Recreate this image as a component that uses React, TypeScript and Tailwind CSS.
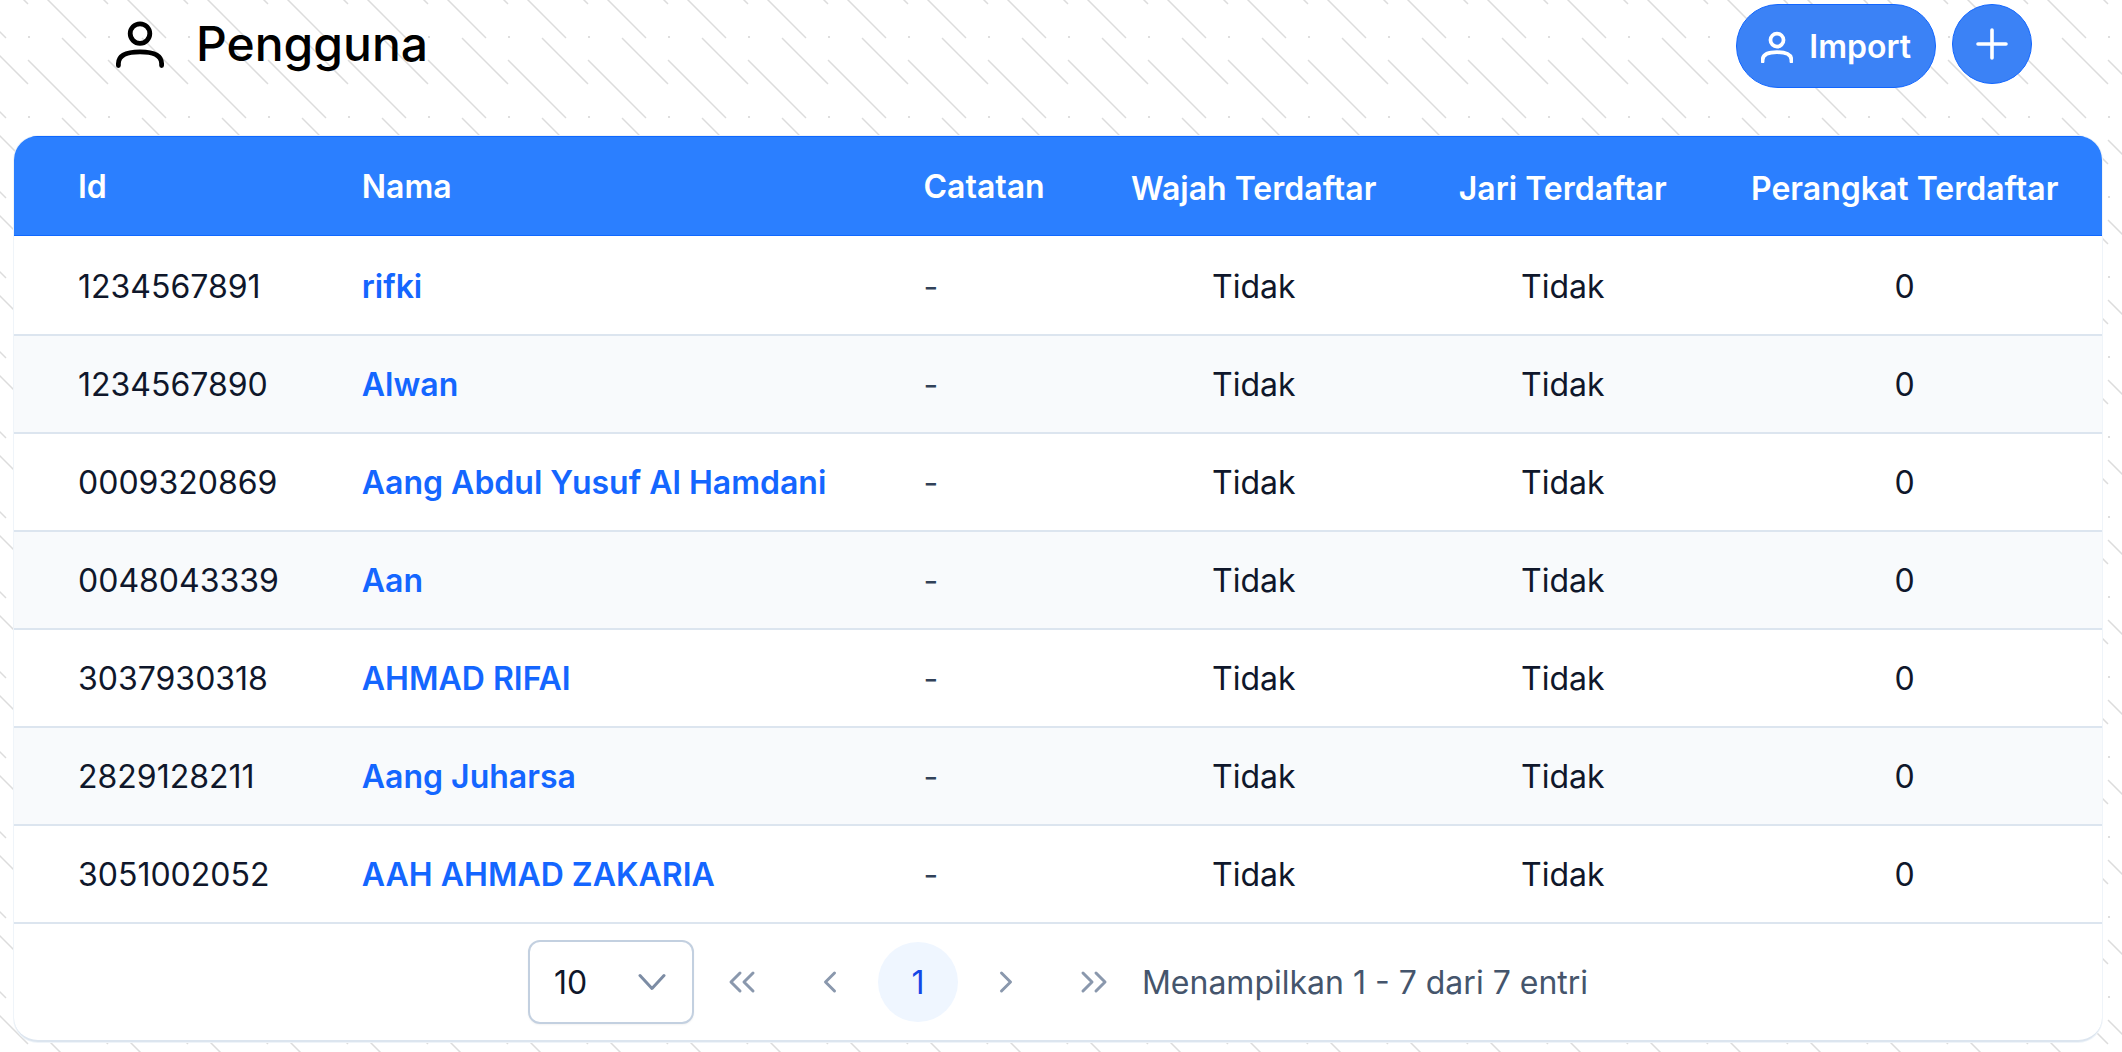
import React from "react";

type User = { id: string; name: string };

const users: User[] = [
  { id: "1234567891", name: "rifki" },
  { id: "1234567890", name: "Alwan" },
  { id: "0009320869", name: "Aang Abdul Yusuf Al Hamdani" },
  { id: "0048043339", name: "Aan" },
  { id: "3037930318", name: "AHMAD RIFAI" },
  { id: "2829128211", name: "Aang Juharsa" },
  { id: "3051002052", name: "AAH AHMAD ZAKARIA" },
];

function Backdrop() {
  return (
    <svg aria-hidden="true" className="absolute inset-0 -z-10 h-full w-full">
      <defs>
        <pattern id="hatch" width="80" height="80" patternUnits="userSpaceOnUse">
          <g stroke="#dcdcdc" strokeWidth="1.5">
            <path d="M28 -20L86 38M28 60L86 118M-52 60L6 118M-52 -20L6 38" />
            <path d="M62 38L108 84M-18 38L28 84M62 -42L108 4M-18 -42L28 4" />
          </g>
          <rect x="28" y="36" width="2" height="2" fill="#dedede" />
        </pattern>
      </defs>
      <rect width="100%" height="100%" fill="url(#hatch)" />
    </svg>
  );
}

function UserIcon({ className, weight }: { className: string; weight: number }) {
  return (
    <svg aria-hidden="true" viewBox="0 0 48 48" fill="none" stroke="currentColor" strokeWidth={weight} strokeLinecap="round" className={className}>
      <circle cx="24" cy="13.6" r="9.8" />
      <path d="M2.400 45.600v-2C2.400 35 10 31.800 24 31.800S45.600 35 45.600 43.600v2" />
    </svg>
  );
}

function Chevrons({ d }: { d: string }) {
  return (
    <svg aria-hidden="true" viewBox="0 0 28 28" fill="none" stroke="currentColor" strokeWidth="3" strokeLinecap="round" strokeLinejoin="round" className="size-7">
      <path d={d} />
    </svg>
  );
}

function PageButton({ label, d }: { label: string; d: string }) {
  return (
    <button type="button" disabled aria-label={label} className="flex size-20 items-center justify-center rounded-full text-[#8a98ad]">
      <Chevrons d={d} />
    </button>
  );
}

const headCell =
  "border-b-2 border-white bg-[#2b7fff] font-semibold whitespace-nowrap shadow-[inset_0_1px_#0f68ff,inset_0_-1px_#0f68ff]";
const bodyCell = "border-b-2 border-[#dce5ef] pt-0.5";

export default function App() {
  return (
    <div className="relative isolate min-h-screen bg-white pt-1 pr-5 pl-3.5 font-['Inter',sans-serif] text-[32px] leading-10 text-slate-900">
      <Backdrop />
      <header className="flex h-[132px] items-start justify-between pr-[70px] pl-[102px]">
        <h1 className="flex h-20 items-center gap-8 text-[48px] leading-none font-medium text-black">
          <UserIcon weight={4.8} className="size-12" />
          Pengguna
        </h1>
        <div className="flex items-start gap-4">
          <button type="button" className="flex h-21 items-center gap-4 rounded-full border border-[#1266ff] bg-[#3b82f6] px-6 pt-0.5 font-semibold text-white">
            <UserIcon weight={5.6} className="size-8" />
            Import
          </button>
          <button type="button" aria-label="Tambah" className="flex size-20 items-center justify-center rounded-full border border-[#1266ff] bg-[#3b82f6] text-white">
            <svg aria-hidden="true" viewBox="0 0 32 32" fill="none" stroke="currentColor" strokeWidth="3.6" strokeLinecap="round" className="size-8">
              <path d="M16 2v28M2 16h28" />
            </svg>
          </button>
        </div>
      </header>

      <main className="overflow-hidden rounded-[24px] border-b-2 border-[#dce5ef] bg-white shadow-[0_0_0_1px_#eff4f9]">
        <table className="w-full table-fixed border-separate border-spacing-0">
          <colgroup>
            <col className="w-[14.550%]" />
            <col className="w-[26.900%]" />
            <col className="w-[10.050%]" />
            <col className="w-[15.750%]" />
            <col className="w-[13.850%]" />
            <col />
          </colgroup>
          <thead>
            <tr className="h-[102px] text-white">
              <th scope="col" className={`${headCell} pt-0.5 pl-16 text-left`}>Id</th>
              <th scope="col" className={`${headCell} pt-0.5 pl-11 text-left`}>Nama</th>
              <th scope="col" className={`${headCell} pt-0.5 pl-11 text-left`}>Catatan</th>
              <th scope="col" className={`${headCell} pt-1.5`}>Wajah Terdaftar</th>
              <th scope="col" className={`${headCell} pt-1.5`}>Jari Terdaftar</th>
              <th scope="col" className={`${headCell} pt-1.5`}>Perangkat Terdaftar</th>
            </tr>
          </thead>
          <tbody>
            {users.map((u) => (
              <tr key={u.id} className="h-[98px] even:bg-slate-50">
                <td className={`${bodyCell} pl-16`}>{u.id}</td>
                <td className={`${bodyCell} pl-11 font-semibold whitespace-nowrap text-[#1466ff]`}>
                  <a href="#">{u.name}</a>
                </td>
                <td className={`${bodyCell} pl-11 text-slate-700`}>-</td>
                <td className={`${bodyCell} text-center`}>Tidak</td>
                <td className={`${bodyCell} text-center`}>Tidak</td>
                <td className={`${bodyCell} text-center`}>0</td>
              </tr>
            ))}
          </tbody>
        </table>

        <nav aria-label="Halaman" className="flex items-center justify-center gap-2 py-4">
          <div className="relative">
            <select aria-label="Baris per halaman" defaultValue="10" className="h-21 w-[166px] appearance-none rounded-xl border-2 border-[#c3d0e0] bg-white pt-0.5 pl-6 leading-10 shadow-xs">
              <option>10</option>
              <option>20</option>
              <option>50</option>
            </select>
            <svg aria-hidden="true" viewBox="0 0 28 28" fill="none" stroke="#7c8ca4" strokeWidth="3" strokeLinecap="round" strokeLinejoin="round" className="pointer-events-none absolute top-7 right-7 size-7">
              <path d="M2 7.500L14 20.500L26 7.500" />
            </svg>
          </div>
          <PageButton label="Halaman pertama" d="M12 5L3 14L12 23M25 5L16 14L25 23" />
          <PageButton label="Halaman sebelumnya" d="M18.500 5L9.500 14L18.500 23" />
          <button type="button" aria-current="page" className="size-20 rounded-full bg-[#eff6ff] pt-0.5 text-[#1447e6]">1</button>
          <PageButton label="Halaman berikutnya" d="M9.500 5L18.500 14L9.500 23" />
          <PageButton label="Halaman terakhir" d="M3 5L12 14L3 23M16 5L25 14L16 23" />
          <span className="pt-0.5 text-slate-600">Menampilkan 1 - 7 dari 7 entri</span>
        </nav>
      </main>
    </div>
  );
}
